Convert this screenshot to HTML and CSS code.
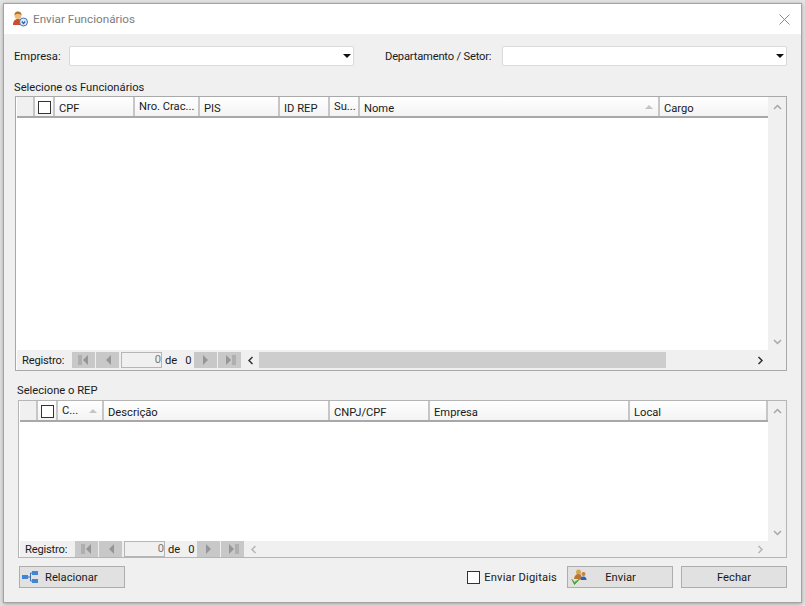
FILE: index.html
```html
<!DOCTYPE html>
<html lang="pt-BR">
<head>
    <meta charset="UTF-8">
    <title>Enviar Funcionários</title>
    <link rel="stylesheet" href="styles.css">
</head>
<body>
    <div class="window">
        <!-- Title bar -->
        <div class="titlebar">
            <svg class="title-icon" width="16" height="16" viewBox="0 0 16 16">
                <path d="M1 14c0-4 2-6 5-6s4 2 4 6z" fill="#c8502a"/>
                <circle cx="6" cy="4.500" r="3.500" fill="#eebd7c"/>
                <path d="M2.500 4c0-3 2-3.500 3.500-3.500S9.500 1 9.500 4C8 2.500 4 2.500 2.500 4z" fill="#a9762f"/>
                <circle cx="11.500" cy="11" r="4" fill="#dbe9f7" stroke="#3f74b5"/>
                <path d="M9.800 10.500l1.700 2 1.700-2" fill="none" stroke="#2f5f9f" stroke-width="1.200"/>
            </svg>
            <span class="title-text">Enviar Funcionários</span>
            <svg class="close-icon" width="11" height="11" viewBox="0 0 11 11">
                <path d="M.5.500l10 10M10.500.500l-10 10" stroke="#8a8a8a" fill="none"/>
            </svg>
        </div>

        <div class="content">
            <!-- Filters -->
            <div class="filters">
                <label class="label-empresa">Empresa:</label>
                <div class="combo"><span class="combo-arrow"></span></div>
                <label class="label-depto">Departamento / Setor:</label>
                <div class="combo"><span class="combo-arrow"></span></div>
            </div>

            <!-- Funcionarios -->
            <div class="section-title">Selecione os Funcionários</div>
            <div class="grid grid-func">
                <div class="grid-main">
                    <div class="grid-header">
                        <div class="col col-row"></div>
                        <div class="col col-check"><span class="check"></span></div>
                        <div class="col">CPF</div>
                        <div class="col col-raised">Nro. Crac...</div>
                        <div class="col">PIS</div>
                        <div class="col">ID REP</div>
                        <div class="col col-raised">Su...</div>
                        <div class="col col-sort">Nome<span class="sort-arrow"></span></div>
                        <div class="col col-last">Cargo</div>
                    </div>
                    <div class="grid-rows"></div>
                </div>
                <div class="vscroll">
                    <svg width="9" height="6" viewBox="0 0 9 6"><path d="M1 5l3.500-3.500L8 5" fill="none" stroke="#a6a6a6" stroke-width="1.500"/></svg>
                    <svg width="9" height="6" viewBox="0 0 9 6"><path d="M1 1l3.500 3.500L8 1" fill="none" stroke="#a6a6a6" stroke-width="1.500"/></svg>
                </div>
                <div class="pager">
                    <span class="pager-label">Registro:</span>
                    <span class="nav-group">
                        <span class="nav-btn"><svg width="12" height="12" viewBox="0 0 12 12"><path d="M1 1v10M3 1v10" stroke="#969696"/><path d="M10 1v10L5 6z" fill="#969696"/></svg></span>
                        <span class="nav-btn"><svg width="12" height="12" viewBox="0 0 12 12"><path d="M9 1v10L4 6z" fill="#969696"/></svg></span>
                    </span>
                    <span class="nav-input">0</span>
                    <span class="nav-de">de</span>
                    <span class="nav-total">0</span>
                    <span class="nav-group">
                        <span class="nav-btn"><svg width="12" height="12" viewBox="0 0 12 12"><path d="M3 1v10l5-5z" fill="#969696"/></svg></span>
                        <span class="nav-btn"><svg width="12" height="12" viewBox="0 0 12 12"><path d="M2 1v10l5-5z" fill="#969696"/><path d="M9 1v10M11 1v10" stroke="#969696"/></svg></span>
                    </span>
                    <div class="hscroll">
                        <svg width="7" height="9" viewBox="0 0 7 9"><path d="M5.500 1L2 4.500 5.500 8" fill="none" stroke="#333" stroke-width="1.500"/></svg>
                        <span class="hscroll-track"><span class="hscroll-thumb"></span></span>
                        <svg width="7" height="9" viewBox="0 0 7 9"><path d="M1.500 1L5 4.500 1.500 8" fill="none" stroke="#333" stroke-width="1.500"/></svg>
                    </div>
                </div>
            </div>

            <!-- REP -->
            <div class="section-title section-rep">Selecione o REP</div>
            <div class="grid grid-rep">
                <div class="grid-main">
                    <div class="grid-header">
                        <div class="col col-row"></div>
                        <div class="col col-check"><span class="check"></span></div>
                        <div class="col col-sort col-raised">C...<span class="sort-arrow"></span></div>
                        <div class="col">Descrição</div>
                        <div class="col">CNPJ/CPF</div>
                        <div class="col">Empresa</div>
                        <div class="col col-end">Local</div>
                    </div>
                    <div class="grid-rows"></div>
                </div>
                <div class="vscroll">
                    <svg width="9" height="6" viewBox="0 0 9 6"><path d="M1 5l3.500-3.500L8 5" fill="none" stroke="#a6a6a6" stroke-width="1.500"/></svg>
                    <svg width="9" height="6" viewBox="0 0 9 6"><path d="M1 1l3.500 3.500L8 1" fill="none" stroke="#a6a6a6" stroke-width="1.500"/></svg>
                </div>
                <div class="pager">
                    <span class="pager-label">Registro:</span>
                    <span class="nav-group">
                        <span class="nav-btn"><svg width="12" height="12" viewBox="0 0 12 12"><path d="M1 1v10M3 1v10" stroke="#969696"/><path d="M10 1v10L5 6z" fill="#969696"/></svg></span>
                        <span class="nav-btn"><svg width="12" height="12" viewBox="0 0 12 12"><path d="M9 1v10L4 6z" fill="#969696"/></svg></span>
                    </span>
                    <span class="nav-input">0</span>
                    <span class="nav-de">de</span>
                    <span class="nav-total">0</span>
                    <span class="nav-group">
                        <span class="nav-btn"><svg width="12" height="12" viewBox="0 0 12 12"><path d="M3 1v10l5-5z" fill="#969696"/></svg></span>
                        <span class="nav-btn"><svg width="12" height="12" viewBox="0 0 12 12"><path d="M2 1v10l5-5z" fill="#969696"/><path d="M9 1v10M11 1v10" stroke="#969696"/></svg></span>
                    </span>
                    <div class="hscroll">
                        <svg width="7" height="9" viewBox="0 0 7 9"><path d="M5.500 1L2 4.500 5.500 8" fill="none" stroke="#b5b5b5" stroke-width="1.500"/></svg>
                        <span class="hscroll-track"></span>
                        <svg width="7" height="9" viewBox="0 0 7 9"><path d="M1.500 1L5 4.500 1.500 8" fill="none" stroke="#b5b5b5" stroke-width="1.500"/></svg>
                    </div>
                </div>
            </div>

            <!-- Bottom buttons -->
            <div class="actions">
                <button class="btn btn-rel">
                    <svg width="16" height="12" viewBox="0 0 16 12">
                        <path d="M6 6h2.500M8.500 2v8M8.500 2H11M8.500 10H11" stroke="#3d6fb0" fill="none"/>
                        <rect x="0" y="4" width="6" height="4" fill="#3f86d6"/>
                        <rect x="10" y="0" width="6" height="4" fill="#3f86d6"/>
                        <rect x="10" y="8" width="6" height="4" fill="#3f86d6"/>
                    </svg>
                    <span>Relacionar</span>
                </button>
                <label class="digitais"><span class="check"></span>Enviar Digitais</label>
                <button class="btn btn-enviar">
                    <svg width="16" height="16" viewBox="0 0 16 16">
                        <circle cx="7.500" cy="3" r="2.500" fill="#d9a44e"/>
                        <path d="M3 10c0-3 2-5 4.500-5s3.500 2 3.500 5z" fill="#b9772e"/>
                        <circle cx="12.500" cy="5" r="2" fill="#c9803e"/>
                        <path d="M9.500 11c0-2 1-3.500 3-3.500s3 1.500 3 3.500z" fill="#2f62b3"/>
                        <path d="M1 10.500l2.500 3 5-3.500-5 5.500z" fill="#4aa83a" stroke="#4aa83a"/>
                    </svg>
                    <span>Enviar</span>
                </button>
                <button class="btn btn-fechar">Fechar</button>
            </div>
        </div>
    </div>
</body>
</html>
```

FILE: styles.css
```css
/* Page and window frame */
html, body {
    margin: 0;
    height: 100%;
    overflow: hidden;
}

body {
    background-color: #e4e4e4;
    font-family: Roboto, "Liberation Sans", Arial, sans-serif;
    font-size: 11.2px;
    color: #1a1a1a;
    padding: 3px 3px 0 3px;
    box-sizing: border-box;
}

.window {
    width: 799px;
    height: 600px;
    box-sizing: border-box;
    border: 1px solid #a3a3a3;
    background-color: #f0f0f0;
    box-shadow: 0 1px 4px rgba(0, 0, 0, 0.3);
    display: flex;
    flex-direction: column;
}

/* Title bar */
.titlebar {
    height: 30px;
    flex: none;
    background-color: #fff;
    display: flex;
    align-items: center;
    padding: 0 11px 0 8px;
}

.title-icon {
    margin-right: 5px;
}

.title-text {
    color: #7d7d7d;
    font-size: 11.7px;
    flex: 1;
}

/* Main content */
.content {
    flex: 1;
    display: flex;
    flex-direction: column;
    padding: 12px 14px 0 10px;
}

.filters {
    display: grid;
    grid-template-columns: 55px 285px 148px 285px;
    align-items: center;
    height: 20px;
}

.label-depto {
    padding-left: 31px;
    white-space: nowrap;
    letter-spacing: -0.2px;
}

.combo {
    height: 20px;
    box-sizing: border-box;
    background-color: #fff;
    border: 1px solid #dadada;
    border-radius: 2px;
    position: relative;
}

.combo-arrow {
    position: absolute;
    right: 2px;
    top: 7px;
    border-left: 4px solid transparent;
    border-right: 4px solid transparent;
    border-top: 4px solid #111;
}

.section-title {
    margin-top: 14px;
    height: 16px;
    line-height: 16px;
}

.section-rep {
    margin-top: 12px;
    margin-bottom: 1px;
    margin-left: 3px;
}

/* Data grids */
.grid {
    margin-left: 1px;
    box-sizing: border-box;
    border: 1px solid #a9a9a9;
    background-color: #fff;
    display: grid;
    grid-template-columns: 751px 18px;
}

.grid-func {
    height: 275px;
    padding-left: 1px;
    grid-template-rows: 253px 20px;
}

.grid-rep {
    height: 158px;
    margin-left: 4px;
    border-color: #b5b5b5;
    padding-left: 1px;
    grid-template-columns: 748px 18px;
    grid-template-rows: 140px 16px;
}

.grid-header {
    height: 21px;
    display: grid;
    border-bottom: 2px solid #a8a8a8;
    box-sizing: border-box;
    background: linear-gradient(#fff, #f3f3f3);
}

.grid-func .grid-header {
    grid-template-columns: 18px 20px 80px 65px 80px 50px 30px 300px 108px;
}

.grid-rep .grid-header {
    grid-template-columns: 18px 20px 46px 226px 100px 200px 138px;
}

.col {
    border-right: 2px solid #c6c6c6;
    padding: 4px 0 0 4px;
    line-height: 15px;
    white-space: nowrap;
    overflow: hidden;
    position: relative;
}

.col-raised {
    padding-top: 2px;
}

.col-last {
    border-right: none;
}

.col-row {
    background-color: #f0f0f0;
    padding: 0;
}

.col-check {
    padding: 4px 0 0 3px;
}

.check {
    display: block;
    width: 13px;
    height: 13px;
    box-sizing: border-box;
    border: 1px solid #333;
    background-color: #fff;
}

.sort-arrow {
    position: absolute;
    right: 5px;
    top: 8px;
    border-left: 4px solid transparent;
    border-right: 4px solid transparent;
    border-bottom: 4px solid #c4c4c4;
}

.vscroll {
    grid-row: 1;
    grid-column: 2;
    background-color: #f0f0f0;
    display: flex;
    flex-direction: column;
    justify-content: space-between;
    align-items: center;
    padding: 7px 0 5px;
    box-sizing: border-box;
}

/* Record navigator */
.pager {
    grid-row: 2;
    grid-column: 1 / 3;
    background-color: #f0f0f0;
    display: flex;
    align-items: center;
    padding-left: 5px;
}

.pager-label {
    width: 50px;
    flex: none;
    letter-spacing: -0.2px;
}

.nav-group {
    display: flex;
    gap: 1px;
}

.nav-btn {
    width: 23px;
    height: 16px;
    background-color: #c8c8c8;
    display: flex;
    align-items: center;
    justify-content: center;
}

.nav-input {
    width: 41px;
    height: 16px;
    box-sizing: border-box;
    margin-left: 2px;
    border: 1px solid #b5b5b5;
    background-color: #f0f0f0;
    color: #777;
    text-align: right;
    line-height: 14px;
    flex: none;
}

.nav-de {
    margin-left: 3px;
    width: 18px;
}

.nav-total {
    width: 11px;
    text-align: center;
}

.hscroll {
    flex: 1;
    display: flex;
    align-items: center;
    height: 16px;
    margin-left: 6px;
    margin-right: 22px;
}

.hscroll-track {
    flex: 1;
    height: 16px;
    margin: 0 5px;
}

.hscroll-thumb {
    display: block;
    width: 407px;
    height: 16px;
    background-color: #cdcdcd;
}

/* Bottom row */
.actions {
    display: flex;
    align-items: center;
    margin-top: 8px;
    margin-left: 5px;
    height: 22px;
}

.btn {
    height: 22px;
    width: 106px;
    box-sizing: border-box;
    border: 1px solid #adadad;
    background-color: #e1e1e1;
    font-family: inherit;
    font-size: 11.2px;
    color: #1a1a1a;
    padding: 0 2px;
    display: flex;
    align-items: center;
    justify-content: center;
}

.btn-rel {
    justify-content: flex-start;
}

.btn-rel span {
    margin-left: 7px;
}

.btn-enviar {
    padding-left: 3px;
}

.btn-enviar span {
    flex: 1;
    text-align: center;
    padding-right: 16px;
}

.digitais {
    margin-left: auto;
    display: flex;
    align-items: center;
    gap: 4px;
    margin-right: 10px;
    letter-spacing: 0.14px;
}

.btn-fechar {
    margin-left: 8px;
}
```
